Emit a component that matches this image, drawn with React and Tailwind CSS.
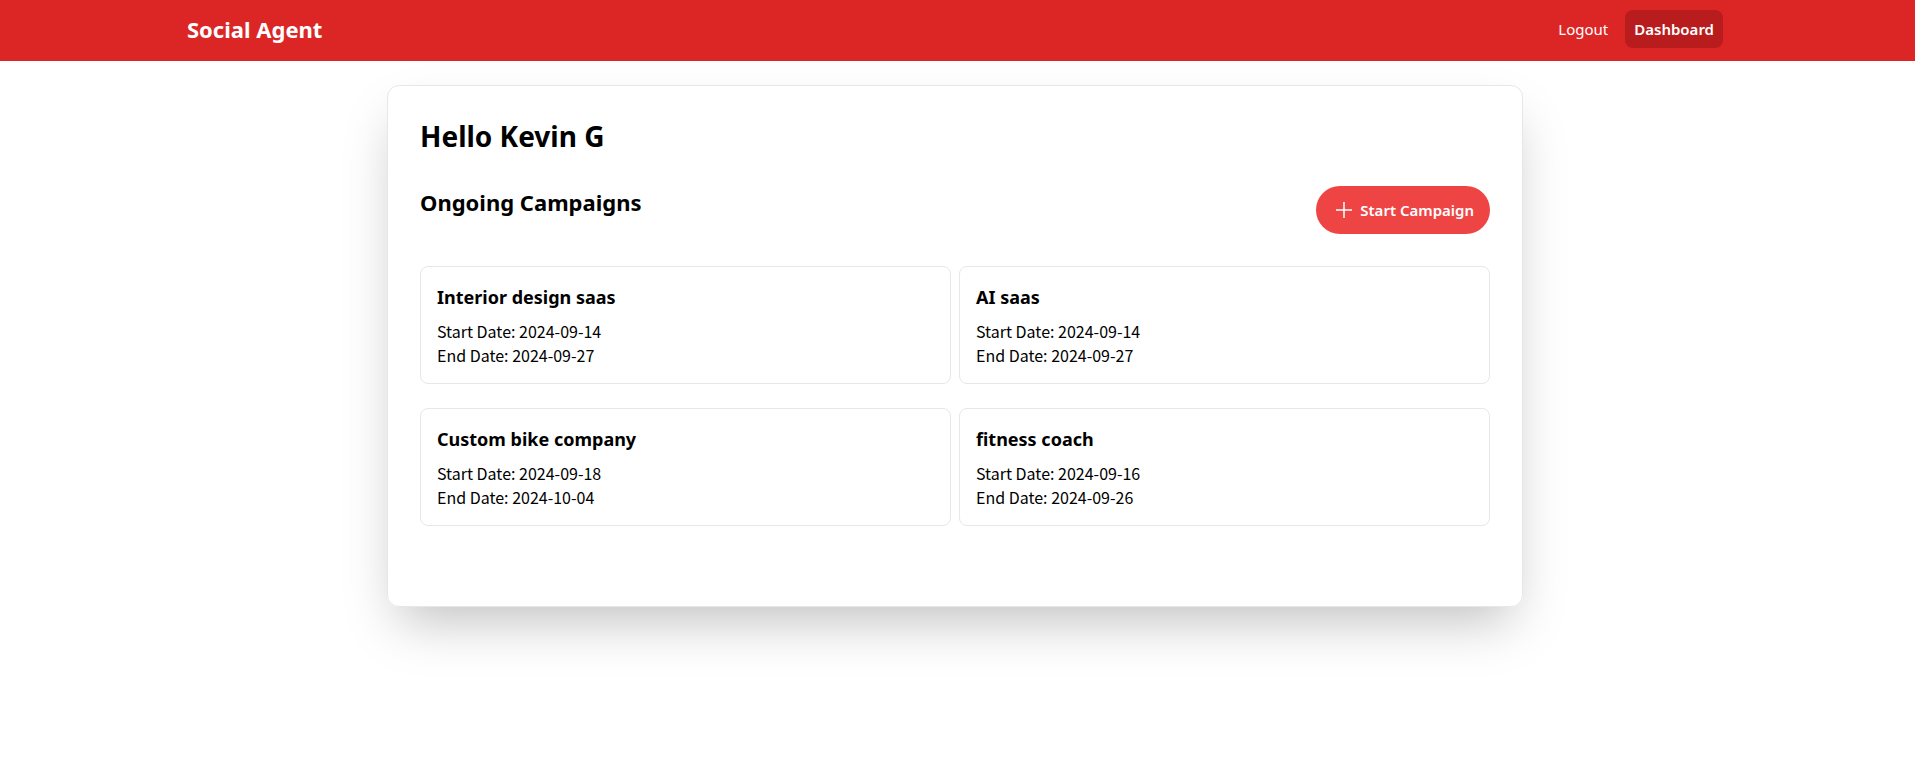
const campaigns = [
  { name: "Interior design saas", start: "2024-09-14", end: "2024-09-27" },
  { name: "AI saas", start: "2024-09-14", end: "2024-09-27" },
  { name: "Custom bike company", start: "2024-09-18", end: "2024-10-04" },
  { name: "fitness coach", start: "2024-09-16", end: "2024-09-26" },
];

function NavBar() {
  return (
    <nav className="bg-[#dc2626] pr-[5px] text-[15px] text-white">
      <div className="mx-auto flex max-w-[1536px] items-center justify-between pt-[10px] pb-[13px]">
        <a href="#home" className="text-[22px] leading-8 font-bold">
          Social Agent
        </a>
        <div className="flex items-center gap-2">
          <button type="button" className="px-[9px] py-[7px] leading-6">
            Logout
          </button>
          <a
            href="#dashboard"
            className="rounded-lg bg-[#b91c1c] px-[9px] py-[7px] leading-6 font-semibold"
          >
            Dashboard
          </a>
        </div>
      </div>
    </nav>
  );
}

function PlusIcon() {
  return (
    <svg
      viewBox="0 0 16 16"
      className="size-4"
      stroke="currentColor"
      strokeWidth="1.5"
      fill="none"
      aria-hidden="true"
    >
      <path d="M8 0v16M0 8h16" />
    </svg>
  );
}

function CampaignCard({ name, start, end }) {
  return (
    <li className="rounded-lg border border-[#e5e7eb] p-4">
      <h3 className="mb-2 text-[18px] leading-7 font-bold">{name}</h3>
      <div className="font-['Noto_Sans_CJK_SC','Noto_Sans',sans-serif] text-base leading-6">
        <p>Start Date: {start}</p>
        <p>End Date: {end}</p>
      </div>
    </li>
  );
}

export default function App() {
  return (
    <div className="min-h-screen bg-white font-['Noto_Sans',sans-serif] text-black">
      <NavBar />
      <div className="pr-[5px]">
        <main className="mx-auto mt-6 max-w-[1136px] rounded-xl border border-[#e5e7eb] p-8 pb-20 shadow-2xl">
          <h1 className="text-[28px] leading-9 font-bold">Hello Kevin G</h1>
          <div className="my-8 flex items-start justify-between">
            <h2 className="text-[22px] leading-8 font-bold">
              Ongoing Campaigns
            </h2>
            <button
              type="button"
              className="flex h-12 items-center gap-2 rounded-full bg-[#ef4444] pr-4 pl-5 text-[15px] font-semibold text-white"
            >
              <PlusIcon />
              Start Campaign
            </button>
          </div>
          <ul className="grid grid-cols-2 gap-x-2 gap-y-6">
            {campaigns.map((c) => (
              <CampaignCard key={c.name} {...c} />
            ))}
          </ul>
        </main>
      </div>
    </div>
  );
}
